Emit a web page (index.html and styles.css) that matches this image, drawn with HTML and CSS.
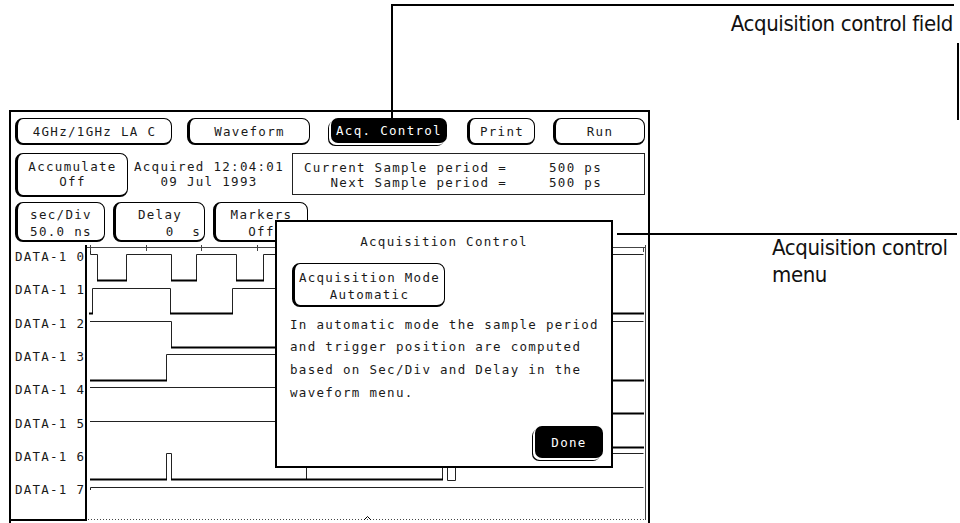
FILE: index.html
```html
<!DOCTYPE html>
<html>
<head>
<meta charset="utf-8">
<title>Acquisition Control</title>
<link rel="stylesheet" href="styles.css">
</head>
<body>
<div class="page">
  <div class="screen">
    <div class="row row1">
      <div class="btn b-model">4GHz/1GHz LA C</div>
      <div class="btn b-wave">Waveform</div>
      <div class="btn-dark b-acq">Acq. Control</div>
      <div class="btn b-print">Print</div>
      <div class="btn b-run">Run</div>
    </div>
    <div class="row row2">
      <div class="btn btn-2l b-accum"><span>Accumulate</span><span>Off</span></div>
      <div class="acquired"><span>Acquired 12:04:01</span><span>09 Jul 1993</span></div>
      <div class="period">
        <span class="plabel">Current Sample period =</span><span class="pval">500 ps</span>
        <span class="plabel">Next Sample period =</span><span class="pval">500 ps</span>
      </div>
    </div>
    <div class="row row3">
      <div class="btn btn-3l b-sec"><span>sec/Div</span><span>50.0 ns</span></div>
      <div class="btn btn-3l b-delay"><span>Delay</span><span class="right">0  s</span></div>
      <div class="btn btn-3l b-mark"><span>Markers</span><span>Off</span></div>
    </div>
    <div class="wave">
      <div class="labels">
        <div class="lbl"><span>DATA-1</span><span>0</span></div>
        <div class="lbl"><span>DATA-1</span><span>1</span></div>
        <div class="lbl"><span>DATA-1</span><span>2</span></div>
        <div class="lbl"><span>DATA-1</span><span>3</span></div>
        <div class="lbl"><span>DATA-1</span><span>4</span></div>
        <div class="lbl"><span>DATA-1</span><span>5</span></div>
        <div class="lbl"><span>DATA-1</span><span>6</span></div>
        <div class="lbl"><span>DATA-1</span><span>7</span></div>
      </div>
      <svg class="traces" width="561" height="278" viewBox="87 245 561 278" xmlns="http://www.w3.org/2000/svg">
        <g fill="none" stroke="#444" stroke-width="1">
          <path d="M87 247.5 H645"/>
          <path d="M90.5 244 V251 M146.5 244 V251 M201.5 244 V251 M257.5 244 V251 M313.5 244 V251 M368.5 244 V251 M424.5 244 V251 M479.5 244 V251 M535.5 244 V251 M590.5 244 V251 M643.5 247 V252"/>
          <path d="M645.5 245 V520"/>
          <path d="M88 519.5 H645" stroke-dasharray="1 2"/>
          <path d="M364 520 L367.5 516.5 L371 520" stroke="#000"/>
        </g>
        <g fill="none" stroke="#222" stroke-width="1">
          <path d="M90.5 251 V254.5 H97.5 V280.5 H126.5 V254.5 H171.5 V280.5 H196.5 V254.5 H236.5 V280.5 H263.5 V254.5 H643.5"/>
          <path d="M89 313.5 H92.5 V288.5 H170.5 V313.5 H232.5 V288.5 H400.5 V313.5 H643.5"/>
          <path d="M90 321.5 H171.5 V347.5 H450.5 V321.5 H643.5"/>
          <path d="M90 380.5 H166.5 V354.5 H450.5 V380.5 H643.5"/>
          <path d="M90 387.5 H450.5 V413.5 H643.5"/>
          <path d="M90 421.5 H450.5 V447.5 H643.5"/>
          <path d="M90 479.5 H166.5 V453.5 H171.5 V479.5 H442.5 V453.5 H447.5 V480.5 H455.5 V453.5 H643.5 M306.5 453.5 V479.5"/>
          <path d="M90.5 490 V487.5 H643.5"/>
        </g>
        <g fill="none" stroke="#000" stroke-width="2">
          <path d="M97 280.5 H127 M171 280.5 H197 M236 280.5 H264"/>
          <path d="M89 313.5 H93 M170 313.5 H233 M400 313.5 H644"/>
          <path d="M171 347.5 H451"/>
          <path d="M90 380.5 H167 M450 380.5 H644"/>
          <path d="M450 413.5 H644"/>
          <path d="M450 447.5 H644"/>
          <path d="M90 479.5 H167 M171 479.5 H443"/>
        </g>
      </svg>
    </div>
    <div class="dialog">
      <div class="dlg-title">Acquisition Control</div>
      <div class="btn dlg-mode"><span>Acquisition Mode</span><span>Automatic</span></div>
      <div class="dlg-text">In automatic mode the sample period
and trigger position are computed
based on Sec/Div and Delay in the
waveform menu.</div>
      <div class="btn-dark b-done">Done</div>
    </div>
  </div>
  <svg class="callouts" width="960" height="523" xmlns="http://www.w3.org/2000/svg">
    <g stroke="#000" stroke-width="2" fill="none">
      <path d="M391 5 H954"/>
      <path d="M392 4 V121"/>
      <path d="M958 43 V120"/>
      <path d="M617 234 H957"/>
    </g>
  </svg>
  <div class="note note-field">Acquisition control field</div>
  <div class="note note-menu">Acquisition control<br>menu</div>
</div>
</body>
</html>
```

FILE: styles.css
```css
* { box-sizing: border-box; }
html, body { margin: 0; padding: 0; background: #fff; }
body { width: 960px; height: 523px; overflow: hidden; }

.page {
  position: relative;
  width: 960px;
  height: 523px;
  padding: 110px 0 0 9px;
  font-family: "DejaVu Sans Mono", "Liberation Mono", monospace;
  font-size: 12.5px;
  letter-spacing: 1.3px;
  color: #1a1a1a;
}

.screen {
  position: relative;
  width: 641px;
  height: 413px;
  border: 2px solid #000;
  border-bottom: 0;
}

.row { display: flex; margin-left: 4px; }
.row1 { margin-top: 6px; height: 27px; align-items: flex-start; }
.row2 { margin-top: 8px; height: 44px; }
.row3 { margin-top: 5px; height: 40px; }

.btn {
  display: flex;
  flex-direction: column;
  align-items: center;
  justify-content: center;
  border: 1px solid #000;
  border-left-width: 3px;
  border-bottom-width: 2px;
  border-radius: 8px;
  white-space: pre;
  background: #fff;
}
.row1 .btn { height: 27px; }

.btn-dark {
  display: flex;
  align-items: center;
  justify-content: center;
  background: #000;
  color: #fff;
  border-radius: 7px;
  box-shadow: -2px 2px 0 0 #fff, -3px 3px 0 0 #000;
  white-space: pre;
}

.b-model { width: 157px; }
.b-wave { width: 123px; margin-left: 15px; }
.b-acq { width: 116px; height: 25px; margin-left: 21px; }
.b-print { width: 68px; margin-left: 20px; }
.b-run { width: 92px; margin-left: 18px; }

.btn-2l { justify-content: flex-start; padding-top: 4.5px; line-height: 15px; }
.b-accum { width: 113px; }

.acquired {
  width: 162px;
  display: flex;
  flex-direction: column;
  align-items: center;
  padding-top: 5.5px;
  line-height: 15px;
  white-space: pre;
}

.period {
  width: 353px;
  height: 42px;
  margin-left: 2px;
  border: 1px solid #222;
  display: grid;
  grid-template-columns: 214px 1fr;
  column-gap: 42px;
  align-content: start;
  padding-top: 5.5px;
  line-height: 15px;
  white-space: pre;
}
.plabel { text-align: right; }

.btn-3l { justify-content: flex-start; padding-top: 2.5px; line-height: 17px; }
.b-sec { width: 90px; }
.b-delay { width: 92px; margin-left: 8px; }
.b-mark { width: 95px; margin-left: 8px; }
.btn .right { align-self: flex-end; margin-right: 3px; }

.wave { display: flex; margin-top: 3px; height: 278px; }

.labels {
  width: 76px;
  height: 276px;
  border-right: 2px solid #000;
  border-bottom: 2px solid #000;
  padding: 4px 1px 0 4px;
  display: flex;
  flex-direction: column;
  gap: 17.33px;
}
.lbl {
  height: 16px;
  line-height: 16px;
  display: flex;
  justify-content: space-between;
  letter-spacing: 1.2px;
}
.lbl span:last-child { letter-spacing: 0; }

.traces { display: block; }

.dialog {
  position: absolute;
  left: 264px;
  top: 108px;
  width: 338px;
  height: 248px;
  border: 2px solid #000;
  background: #fff;
  display: flex;
  flex-direction: column;
}
.dlg-title { margin-top: 12px; text-align: center; line-height: 16px; }
.dlg-mode {
  margin: 13px 0 0 15px;
  width: 153px;
  height: 44px;
  justify-content: flex-start;
  padding-top: 4.5px;
  line-height: 17px;
}
.dlg-text {
  margin: 6.6px 0 0 13px;
  line-height: 22.7px;
  white-space: pre;
}
.b-done {
  width: 68px;
  height: 32px;
  margin: auto 8px 8px auto;
}

.callouts { position: absolute; left: 0; top: 0; pointer-events: none; }

.note {
  position: absolute;
  font-family: "DejaVu Sans Condensed", "DejaVu Sans", sans-serif;
  font-stretch: condensed;
  font-size: 22px;
  line-height: 27px;
  letter-spacing: -0.4px;
  color: #111;
  white-space: nowrap;
}
.note-field { right: 7px; top: 10px; }
.note-menu { left: 772px; top: 234px; }
```
